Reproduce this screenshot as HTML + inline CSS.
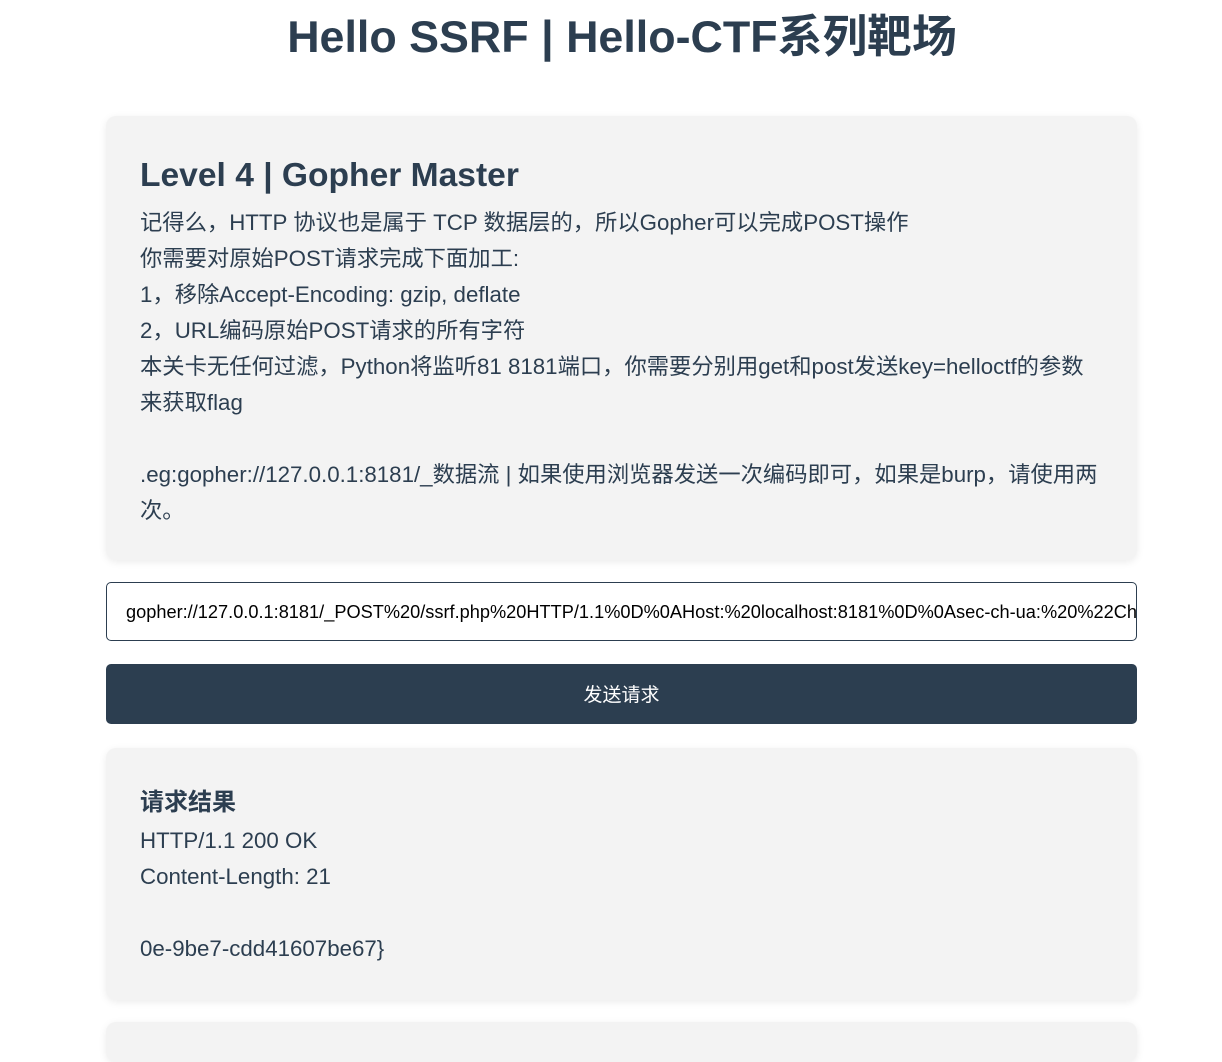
<!DOCTYPE html>
<html><head><meta charset="utf-8"><style>
*{box-sizing:border-box;margin:0;padding:0}
body{width:1222px;height:1026px;overflow:hidden;background:#fff;font-family:"Liberation Sans","Noto Sans CJK SC",sans-serif;color:#2c3e50}
h1{text-align:center;font-size:44.8px;font-weight:bold;position:absolute;top:11px;left:11px;width:1222px;line-height:52px}
.card{position:absolute;left:106px;width:1031px;background:#f3f3f3;border-radius:10px;box-shadow:0 2px 8px rgba(0,0,0,0.08);padding:0 34px}
.c1{top:116px;height:444px}
.c1 h2{font-size:33.6px;font-weight:bold;margin-top:38px;line-height:44px}
.c1 p,.c3 p{font-size:22.3px;line-height:36px}
.c1 p{margin-top:7px}
.inp{position:absolute;left:106px;top:582px;width:1031px;height:59px;border:1px solid #2c3e50;border-radius:5px;background:#fff;font-size:18.2px;line-height:58px;padding-left:19px;white-space:nowrap;overflow:hidden;color:#000}
.btn{position:absolute;left:106px;top:664px;width:1031px;height:60px;background:#2c3e50;border-radius:5px;color:#fff;font-size:19px;text-align:center;line-height:63px}
.c3{top:748px;height:252px}
.c3 h3{font-size:24px;font-weight:bold;margin-top:40px;line-height:30px}
.c3 p{margin-top:5px}
.c4{top:1022px;height:40px}
</style></head><body>
<h1>Hello SSRF | Hello-CTF系列靶场</h1>
<div class="card c1"><h2>Level 4 | Gopher Master</h2>
<p>记得么，HTTP 协议也是属于 TCP 数据层的，所以Gopher可以完成POST操作<br>你需要对原始POST请求完成下面加工:<br>1，移除Accept-Encoding: gzip, deflate<br>2，URL编码原始POST请求的所有字符<br>本关卡无任何过滤，Python将监听81 8181端口，你需要分别用get和post发送key=helloctf的参数来获取flag<br><br>.eg:gopher://127.0.0.1:8181/_数据流 | 如果使用浏览器发送一次编码即可，如果是burp，请使用两次。</p></div>
<div class="inp">gopher://127.0.0.1:8181/_POST%20/ssrf.php%20HTTP/1.1%0D%0AHost:%20localhost:8181%0D%0Asec-ch-ua:%20%22Chromium</div>
<div class="btn">发送请求</div>
<div class="card c3"><h3>请求结果</h3><p>HTTP/1.1 200 OK<br>Content-Length: 21<br><br>0e-9be7-cdd41607be67}</p></div>
<div class="card c4"></div>
</body></html>
